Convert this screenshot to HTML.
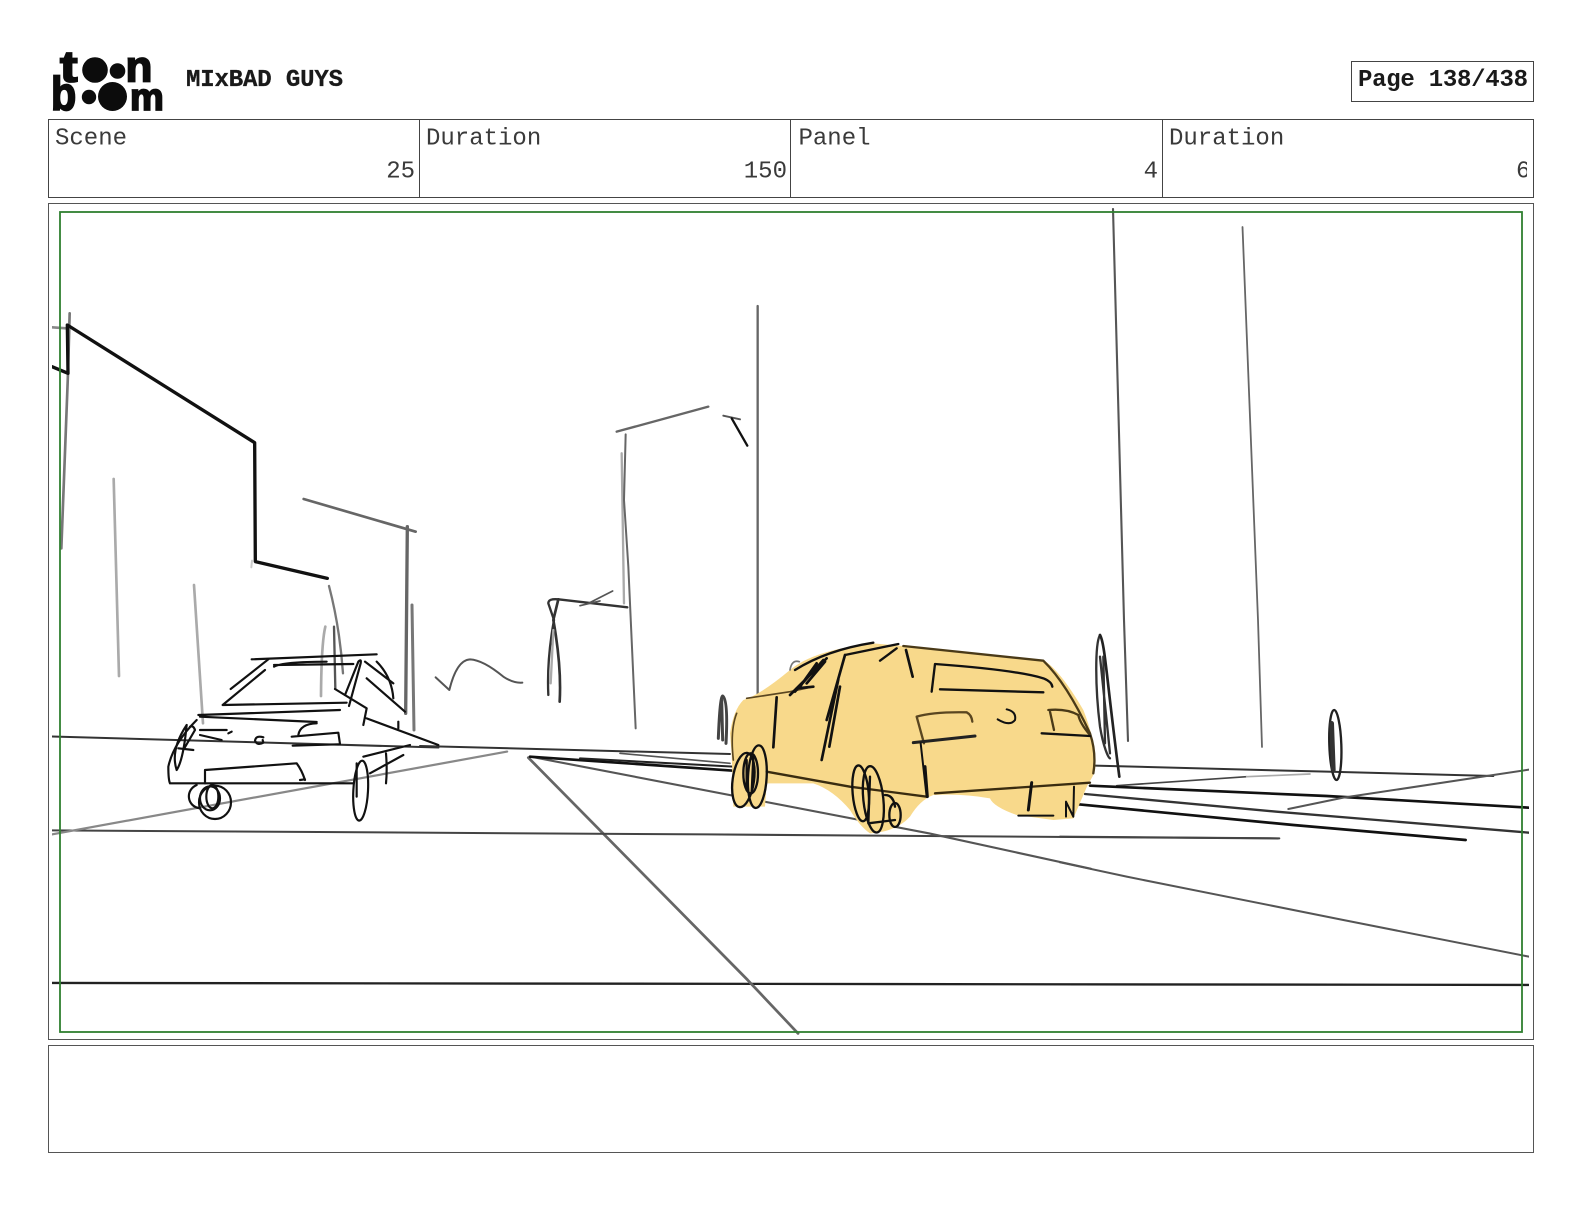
<!DOCTYPE html>
<html><head><meta charset="utf-8"><style>
html,body{margin:0;padding:0;background:#fff}
body{width:1584px;height:1224px;overflow:hidden}
svg{display:block;position:absolute;left:0;top:0}
text{font-family:"Liberation Mono",monospace}
.l{font-size:24px;fill:#3a3a3a}
.lg{font-family:"Liberation Sans",sans-serif;font-weight:700;stroke:#0c0c0c;stroke-width:1.8px}
.p path,.p ellipse{fill:none;stroke-linecap:round;stroke-linejoin:round}
</style></head><body>
<svg width="1584" height="1224" viewBox="0 0 1584 1224">
<defs>
<clipPath id="c"><rect x="52" y="208" width="1477" height="827"/></clipPath>
<clipPath id="c6"><rect x="1163" y="120" width="364" height="76"/></clipPath>
</defs>
<rect width="1584" height="1224" fill="#fff"/>
<!-- logo -->
<g fill="#0c0c0c">
<text class="lg" transform="translate(60,81.5) scale(1.2,1)" style="font-size:44px">t</text>
<circle cx="95" cy="70" r="12.8"/><circle cx="117.5" cy="71" r="7.8"/>
<text class="lg" transform="translate(125.5,81.5)" style="font-size:44px">n</text>
<text class="lg" transform="translate(51,110) scale(.88,1)" style="font-size:47px">b</text>
<circle cx="89" cy="97" r="7.2"/><circle cx="112.5" cy="96.5" r="14.5"/>
<text class="lg" transform="translate(130,110)" style="font-size:38px">m</text>
</g>
<text x="186" y="86" style="font-size:24px;font-weight:700" fill="#1a1a1a" stroke="#1a1a1a" stroke-width=".3" textLength="157">MIxBAD GUYS</text>
<!-- page box -->
<rect x="1351.5" y="61.5" width="182" height="40" fill="none" stroke="#444" stroke-width="1"/>
<text x="1358" y="86" style="font-size:24px;font-weight:700" fill="#1a1a1a" textLength="170">Page 138/438</text>
<!-- info table -->
<rect x="48.5" y="119.5" width="1485" height="78" fill="none" stroke="#444" stroke-width="1"/>
<path d="M419.5 119.5V197.5M790.5 119.5V197.5M1162.5 119.5V197.5" stroke="#444" fill="none"/>
<text class="l" x="55" y="144.5">Scene</text>
<text class="l" x="426" y="144.5">Duration</text>
<text class="l" x="798.5" y="144.5">Panel</text>
<text class="l" x="1169" y="144.5">Duration</text>
<text class="l" x="415" y="177.5" text-anchor="end">25</text>
<text class="l" x="787" y="177.5" text-anchor="end">150</text>
<text class="l" x="1158" y="177.5" text-anchor="end">4</text>
<g clip-path="url(#c6)"><text class="l" x="1516" y="177.5">6</text></g>
<!-- panel boxes -->
<rect x="48.5" y="203.5" width="1485" height="836" fill="none" stroke="#555" stroke-width="1"/>
<rect x="48.5" y="1045.5" width="1485" height="107" fill="none" stroke="#555" stroke-width="1"/>

<g class="p" clip-path="url(#c)">
<!-- long lines -->
<g transform="scale(1.0102)">
<path d="M51 973 L1513 975" stroke="#222" stroke-width="2.3"/>
<path d="M523 750 L740 970 L790 1023" stroke="#666" stroke-width="2.7"/>
<path d="M51 822 L700 826 L1265 830" stroke="#444" stroke-width="2"/>
<path d="M525 749 L920 825 L1080 860" stroke="#555" stroke-width="2.1"/>
<path d="M51 826 L502 744" stroke="#888" stroke-width="2.2"/>
<path d="M51 729 L434 740" stroke="#333" stroke-width="2"/>
</g>
<path d="M1113 209 L1124 620 L1128 741" stroke="#555" stroke-width="2.1"/>
<path d="M1242.5 227 L1258 620 L1262 747" stroke="#666" stroke-width="1.8"/>
<!-- left buildings -->
<g transform="translate(48,310) scale(.33333)">
<path d="M12 52 L55 55" stroke="#888" stroke-width="8"/>
<path d="M65 10 L60 190 L40 715" stroke="#777" stroke-width="8"/>
<path d="M12 170 L60 190 L58 45 L620 398 L622 755 L838 805" stroke="#111" stroke-width="10"/>
<path d="M767 567 L1103 665" stroke="#666" stroke-width="8"/>
<path d="M1078 650 L1073 1210" stroke="#666" stroke-width="10"/>
<path d="M1092 885 L1098 1260" stroke="#777" stroke-width="9"/>
<path d="M197 507 L213 1098" stroke="#aaa" stroke-width="8"/>
<path d="M438 825 L465 1240" stroke="#aaa" stroke-width="8"/>
<path d="M843 828 Q875 950 885 1090" stroke="#777" stroke-width="7"/>
<path d="M832 950 Q820 1000 819 1158" stroke="#aaa" stroke-width="8"/>
<path d="M858 950 L862 1135" stroke="#555" stroke-width="7"/>
<path d="M612 752 L610 772" stroke="#ccc" stroke-width="6"/>
</g>
<!-- centre -->
<g transform="translate(420,400) scale(.33333)">
<path d="M590 95 L865 20" stroke="#666" stroke-width="7"/>
<path d="M910 47 L960 58" stroke="#555" stroke-width="6"/>
<path d="M935 55 L982 137" stroke="#111" stroke-width="7"/>
<path d="M605 160 L612 610" stroke="#aaa" stroke-width="7"/>
<path d="M617 103 L612 300 L625 500 L647 985" stroke="#666" stroke-width="6"/>
<path d="M622 622 L415 598 Q385 595 385 610 L402 660 Q380 780 385 885" stroke="#333" stroke-width="7"/>
<path d="M415 598 L400 660 Q425 800 419 905" stroke="#333" stroke-width="8"/>
<path d="M400 690 L392 850" stroke="#aaa" stroke-width="7"/>
<path d="M578 573 L505 610 M480 617 L540 603" stroke="#555" stroke-width="5"/>
<path d="M47 832 L88 870 Q110 780 150 778 Q190 780 250 830 Q280 850 307 848" stroke="#555" stroke-width="6"/>
<path d="M1013 -282 L1013 885" stroke="#666" stroke-width="7"/>
<path d="M895 1015 Q900 890 908 888 Q925 900 918 1030 M905 900 L908 1020" stroke="#444" stroke-width="9"/>
<path d="M0 1038 L930 1062" stroke="#333" stroke-width="6"/>
<path d="M330 1070 L940 1112" stroke="#111" stroke-width="8"/>
<path d="M480 1075 L940 1100" stroke="#222" stroke-width="6"/>
<path d="M600 1060 L930 1090" stroke="#555" stroke-width="5"/>
</g>
<!-- right -->
<g transform="translate(1060,620) scale(.33333)">
<path d="M105 437 L800 455 L1300 468" stroke="#333" stroke-width="6"/>
<path d="M170 497 L560 470" stroke="#444" stroke-width="5"/>
<path d="M560 470 L750 462" stroke="#aaa" stroke-width="5"/>
<path d="M90 497 L800 528 L1407 563" stroke="#111" stroke-width="8"/>
<path d="M75 522 L650 575 L1407 638" stroke="#333" stroke-width="7"/>
<path d="M55 553 L700 615 L1217 660" stroke="#111" stroke-width="8"/>
<path d="M0 650 L658 655" stroke="#444" stroke-width="6"/>
<path d="M0 727 L200 770 L850 900 L1407 1010" stroke="#555" stroke-width="6"/>
<path d="M685 567 L850 533 L1300 465 L1407 449" stroke="#555" stroke-width="6"/>
<path d="M120 45 C105 70 105 200 120 320 C130 380 145 415 150 415" stroke="#333" stroke-width="7"/>
<path d="M120 45 C135 70 140 180 178 470" stroke="#222" stroke-width="8"/>
<path d="M120 110 L150 400 M130 110 L135 370" stroke="#333" stroke-width="7"/>
<ellipse cx="826" cy="375" rx="18" ry="105" transform="rotate(-2 826 375)" stroke="#222" stroke-width="7"/>
<path d="M815 310 L820 450" stroke="#333" stroke-width="14"/>
</g>
<!-- yellow car -->
<g transform="translate(700,620) scale(.33333)">
<path d="M130 240 Q180 225 270 150 Q340 90 520 70 L610 78 L1030 120 Q1080 150 1150 270 Q1190 370 1185 450 Q1180 470 1165 490 L1120 595 L1060 600 L950 585 Q880 560 870 535 Q790 520 700 525 Q660 540 630 590 Q590 635 510 640 Q480 620 450 570 Q400 510 340 490 L200 490 L195 560 L100 560 L95 400 L90 340 Q100 270 130 240 Z" style="fill:#f8d98b;stroke:none"/>
<path d="M270 150 Q275 118 298 125" stroke="#777" stroke-width="5"/>
<path d="M140 235 L270 215 L340 200 M110 280 Q90 330 100 420" stroke="#5a4620" stroke-width="5"/>
<path d="M610 78 L1030 122 Q1100 190 1170 340 Q1190 400 1180 460" stroke="#4a3a18" stroke-width="7"/>
<path d="M200 455 L450 500 L680 530 M705 520 L1170 488" stroke="#3a2c10" stroke-width="7"/>
<path d="M230 232 L220 382 M415 178 L365 420 M420 200 L388 380 M435 105 L380 300" stroke="#111" stroke-width="8"/>
<path d="M435 105 L595 72 M285 150 Q380 90 520 68 M540 122 L590 85" stroke="#111" stroke-width="7"/>
<path d="M618 90 L638 170" stroke="#111" stroke-width="8"/>
<path d="M270 225 L380 115 M285 215 L370 120 M300 200 L350 130 M290 205 L340 200 M320 190 L375 125" stroke="#111" stroke-width="8"/>
<path d="M695 215 L705 132 Q950 150 1030 175 Q1055 185 1057 200 M720 208 L1030 217" stroke="#111" stroke-width="7"/>
<path d="M650 290 Q700 275 800 277 Q815 285 817 305 M650 290 L672 370" stroke="#5a4620" stroke-width="7"/>
<path d="M640 368 L825 348" stroke="#222" stroke-width="9"/>
<path d="M662 370 L680 530" stroke="#111" stroke-width="6"/>
<path d="M675 440 L682 530" stroke="#111" stroke-width="9"/>
<path d="M920 268 Q950 275 945 300 Q930 320 893 298" stroke="#111" stroke-width="6"/>
<path d="M1045 270 Q1100 265 1135 285 Q1140 310 1170 345 M1050 275 L1062 330" stroke="#4a3a18" stroke-width="7"/>
<path d="M1025 340 L1170 348" stroke="#111" stroke-width="7"/>
<path d="M995 488 L985 570" stroke="#111" stroke-width="9"/>
<path d="M955 587 L1060 587" stroke="#111" stroke-width="6"/>
<path d="M1098 590 L1098 545 L1120 590 L1122 500" stroke="#111" stroke-width="6"/>
<g stroke="#111" stroke-width="7">
<ellipse cx="172" cy="470" rx="28" ry="94" transform="rotate(3 172 470)"/>
<ellipse cx="130" cy="480" rx="32" ry="82" transform="rotate(8 130 480)"/>
<ellipse cx="152" cy="460" rx="22" ry="60"/>
<path d="M160 410 L155 520 M140 420 L140 510"/>
<ellipse cx="520" cy="538" rx="30" ry="100" transform="rotate(-6 520 538)"/>
<ellipse cx="482" cy="520" rx="24" ry="84" transform="rotate(-5 482 520)"/>
<path d="M510 470 L505 610 L585 600"/>
<ellipse cx="585" cy="585" rx="17" ry="36"/>
<path d="M555 525 Q580 525 585 560"/>
</g>
</g>
<!-- left car -->
<g transform="translate(150,620) scale(.33333)" stroke="#111" stroke-width="6.5">
<path d="M305 118 L680 103"/>
<path d="M355 118 L242 207 M345 150 L218 255 L590 248"/>
<path d="M372 140 Q400 125 530 125 M372 135 L610 132"/>
<path d="M585 225 L625 125 Q635 115 632 130 L597 258"/>
<path d="M645 125 L730 190 M680 125 Q725 170 730 235 M650 175 L765 275"/>
<path d="M555 207 L650 265 L640 315 M650 295 L865 375"/>
<path d="M745 305 L745 325"/>
<path d="M145 285 L570 270 M150 290 L500 306"/>
<path d="M140 300 Q70 370 55 440 Q55 480 60 490 L610 490"/>
<path d="M110 315 Q60 390 80 450 Q100 420 110 315 M120 320 Q130 315 135 330 L100 390"/>
<path d="M150 330 L230 330 M150 345 L215 360 M85 385 L130 390 M235 340 L245 335"/>
<path d="M340 352 Q318 345 315 362 Q322 378 340 368 L338 360"/>
<path d="M445 345 Q450 312 500 310 M425 350 L565 338 L570 372 M428 377 L565 373"/>
<path d="M165 490 L165 450 Q300 440 440 430 Q455 450 465 480 M450 480 L465 478"/>
<path d="M140 495 C105 510 110 560 150 565"/>
<ellipse cx="195" cy="547" rx="48" ry="50"/>
<ellipse cx="180" cy="535" rx="30" ry="36"/>
<ellipse cx="187" cy="530" rx="18" ry="35"/>
<ellipse cx="632" cy="512" rx="22" ry="90" transform="rotate(3 632 512)"/>
<path d="M620 430 L620 530"/>
<path d="M640 410 L780 375 M660 460 L760 405 M708 400 Q712 450 708 490"/>
</g>
</g>
<!-- green safe frame -->
<rect x="60" y="212" width="1462" height="820" fill="none" stroke="#2f8030" stroke-width="1.8"/>
</svg>
</body></html>
